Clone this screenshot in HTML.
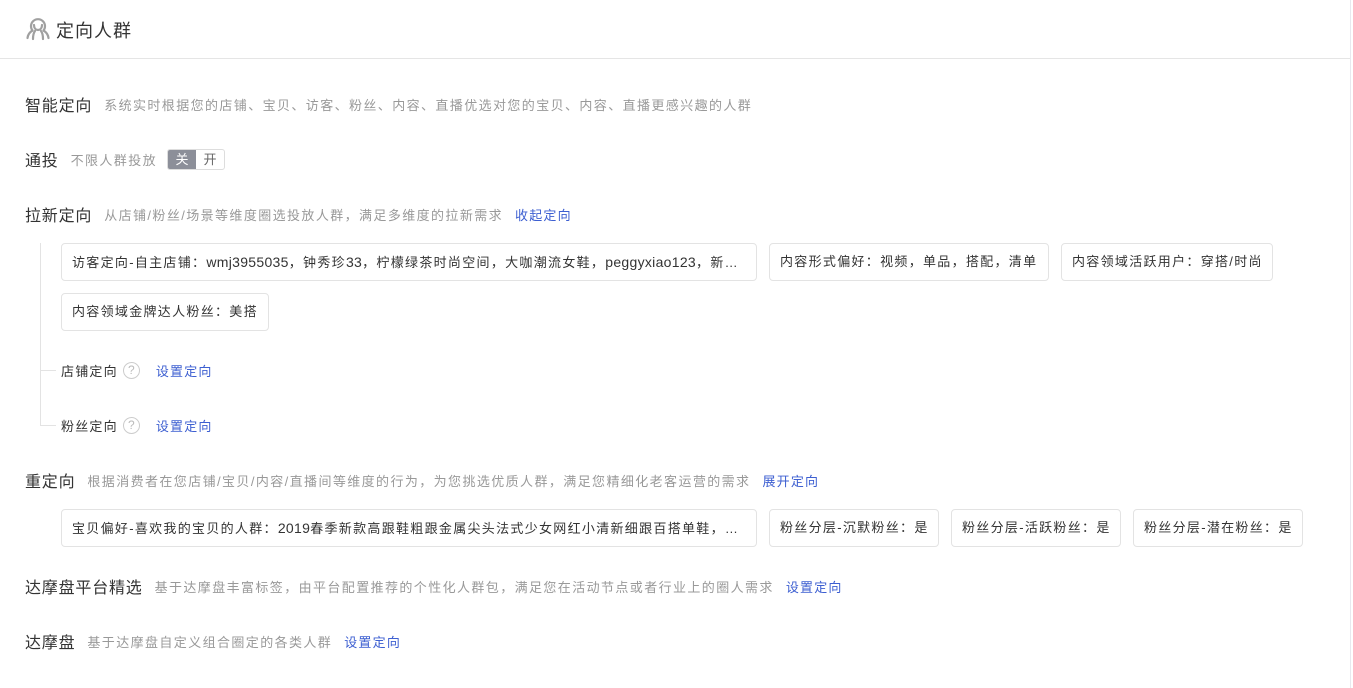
<!DOCTYPE html>
<html><head><meta charset="utf-8"><style>
*{margin:0;padding:0;box-sizing:border-box}
body{width:1353px;height:688px;background:#fff;font-family:"Liberation Sans","Noto Sans CJK SC",sans-serif;color:#333;position:relative;overflow:hidden}
.a{position:absolute;white-space:nowrap}
.h{font-size:16px;color:#333;letter-spacing:0.8px}
.d{font-size:13px;color:#999;margin-left:12px;letter-spacing:1.4px}
.l{font-size:13px;color:#3d5fd1;margin-left:12px;letter-spacing:1.2px}
.row{position:absolute;left:25px;display:flex;align-items:center;white-space:nowrap;height:24px}
.tag{position:absolute;height:38px;border:1px solid #e3e3e3;border-radius:4px;font-size:13px;color:#333;line-height:36px;padding-left:10px;white-space:nowrap;overflow:hidden;letter-spacing:1.3px}
.tag i{font-style:normal;letter-spacing:0.3px;font-size:14px}
.q{display:inline-block;width:17px;height:17px;border:1px solid #ccc;border-radius:50%;color:#bbb;font-size:12px;line-height:15px;text-align:center;margin-left:5px}
</style></head><body>
<div class="a" style="right:2px;top:0;width:1px;height:688px;background:#e8e8ee"></div>
<svg class="a" style="left:25px;top:16px" width="26" height="26" viewBox="0 0 26 26" fill="none" stroke="#a0a0a0" stroke-width="2.2" stroke-linecap="round" stroke-linejoin="round"><path d="M7.5 14.5A7 7 0 1 1 18.5 14.5"/><path d="M9 9c0 3 1.6 5 4 5s4-2 4-5"/><path d="M7.5 14.5C5 16 3 18 2.5 22M18.5 14.5C21 16 23 18 23.5 22M10 15c-1.5 2-2 4-2 8M16 15c1.5 2 2 4 2 8"/></svg>
<div class="a" style="left:56px;top:17px;font-size:18px;color:#333;letter-spacing:1px">定向人群</div>
<div class="a" style="left:0;top:58px;width:1350px;height:1px;background:#e5e5e5"></div>

<div class="row" style="top:92px"><span class="h">智能定向</span><span class="d">系统实时根据您的店铺、宝贝、访客、粉丝、内容、直播优选对您的宝贝、内容、直播更感兴趣的人群</span></div>
<div class="row" style="top:147px"><span class="h">通投</span><span class="d">不限人群投放</span>
<span style="margin-left:10px;display:inline-flex;border:1px solid #ddd;border-radius:3px;height:21px;font-size:13px;overflow:hidden"><span style="background:#8c8f99;color:#fff;width:28px;text-align:center;line-height:19px">关</span><span style="color:#666;width:28px;text-align:center;line-height:19px">开</span></span></div>
<div class="row" style="top:202px"><span class="h">拉新定向</span><span class="d">从店铺/粉丝/场景等维度圈选投放人群，满足多维度的拉新需求</span><span class="l">收起定向</span></div>

<div class="a" style="left:40px;top:243px;width:1px;height:183px;background:#e3e3e3"></div>
<div class="a" style="left:40px;top:370px;width:16px;height:1px;background:#e3e3e3"></div>
<div class="a" style="left:40px;top:425px;width:16px;height:1px;background:#e3e3e3"></div>

<div class="tag" style="left:61px;top:243px;width:696px">访客定向-自主店铺：<i>wmj3955035</i>，钟秀珍<i>33</i>，柠檬绿茶时尚空间，大咖潮流女鞋，<i>peggyxiao123</i>，新…</div>
<div class="tag" style="left:769px;top:243px;width:280px">内容形式偏好：视频，单品，搭配，清单</div>
<div class="tag" style="left:1061px;top:243px;width:212px">内容领域活跃用户：穿搭/时尚</div>
<div class="tag" style="left:61px;top:293px;width:208px">内容领域金牌达人粉丝：美搭</div>

<div class="row" style="top:358px;left:61px"><span style="font-size:13px;letter-spacing:1.2px">店铺定向</span><span class="q">?</span><span class="l" style="margin-left:16px">设置定向</span></div>
<div class="row" style="top:413px;left:61px"><span style="font-size:13px;letter-spacing:1.2px">粉丝定向</span><span class="q">?</span><span class="l" style="margin-left:16px">设置定向</span></div>

<div class="row" style="top:468px"><span class="h">重定向</span><span class="d">根据消费者在您店铺/宝贝/内容/直播间等维度的行为，为您挑选优质人群，满足您精细化老客运营的需求</span><span class="l">展开定向</span></div>
<div class="tag" style="left:61px;top:509px;width:696px">宝贝偏好-喜欢我的宝贝的人群：<i>2019</i>春季新款高跟鞋粗跟金属尖头法式少女网红小清新细跟百搭单鞋，…</div>
<div class="tag" style="left:769px;top:509px;width:170px">粉丝分层-沉默粉丝：是</div>
<div class="tag" style="left:951px;top:509px;width:170px">粉丝分层-活跃粉丝：是</div>
<div class="tag" style="left:1133px;top:509px;width:170px">粉丝分层-潜在粉丝：是</div>

<div class="row" style="top:574px"><span class="h">达摩盘平台精选</span><span class="d">基于达摩盘丰富标签，由平台配置推荐的个性化人群包，满足您在活动节点或者行业上的圈人需求</span><span class="l">设置定向</span></div>
<div class="row" style="top:629px"><span class="h">达摩盘</span><span class="d">基于达摩盘自定义组合圈定的各类人群</span><span class="l">设置定向</span></div>
</body></html>
